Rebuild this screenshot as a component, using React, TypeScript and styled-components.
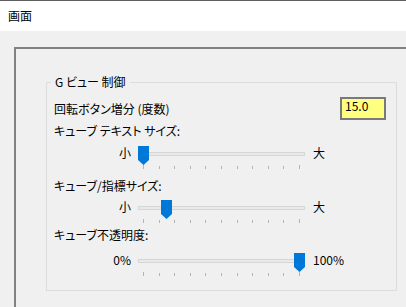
import styled, { createGlobalStyle } from "styled-components";

const GlobalStyle = createGlobalStyle`
  html, body {
    margin: 0;
    padding: 0;
    background: #f0f0f0;
  }
  body {
    font-family: "Noto Sans CJK JP", "Noto Sans", sans-serif;
    font-size: 12px;
    color: #000;
    font-feature-settings: "palt";
  }
`;

const Window = styled.div`
  width: 406px;
  height: 307px;
  overflow: hidden;
  display: flex;
  flex-direction: column;
  background: #f0f0f0;
`;

const TitleBar = styled.div`
  flex: none;
  height: 30px;
  display: flex;
  align-items: center;
  padding-left: 8px;
  background: #fff;
  border-top: 1px solid #5f5f5f;
  line-height: 14px;
`;

const Body = styled.div`
  flex: 1;
  display: flex;
  padding: 16px 0 0 14px;
  min-height: 0;
`;

/* outer panel, runs off the right and bottom edge */
const Frame = styled.div`
  flex: 1;
  border-top: 2px solid #828282;
  border-left: 2px solid #828282;
  padding: 33px 0 0 30px;
`;

const Group = styled.div`
  position: relative;
  width: 351px;
  height: 209px;
  box-sizing: border-box;
  border: 1px solid #dcdcdc;
  padding: 0 10px 0 7px;
  display: flex;
  flex-direction: column;
`;

const Legend = styled.div`
  position: absolute;
  top: -8px;
  left: 4px;
  padding: 0 4px;
  background: #f0f0f0;
  line-height: 14px;
`;

const Label = styled.div<{ $gap: number }>`
  line-height: 14px;
  margin-top: ${(p) => p.$gap}px;
`;

const InputRow = styled.div`
  display: flex;
  align-items: center;
  justify-content: space-between;
  height: 23px;
  margin-top: 14px;
`;

const TextBox = styled.div`
  width: 46px;
  height: 23px;
  box-sizing: border-box;
  border: 2px solid #7a7a7a;
  background: #ffff80;
  padding: 0 0 0 3px;
  line-height: 14px;
`;

const SliderRow = styled.div<{ $gap: number }>`
  display: grid;
  grid-template-columns: 77px 167px 1fr;
  column-gap: 7px;
  margin-top: ${(p) => p.$gap}px;
`;

const SideLabel = styled.div<{ $right?: boolean }>`
  line-height: 14px;
  margin-top: 0px;
  text-align: ${(p) => (p.$right ? "right" : "left")};
  margin-left: ${(p) => (p.$right ? 0 : 1)}px;
`;

const Track = styled.div`
  position: relative;
  padding-top: 6px;
`;

const Rail = styled.div`
  height: 4px;
  box-sizing: border-box;
  border: 1px solid #d6d6d6;
  background: #e7eaea;
`;

const Ticks = styled.div`
  display: flex;
  justify-content: space-between;
  align-items: flex-end;
  height: 4px;
  margin: 9px 5px 0 5px;
`;

const Tick = styled.div<{ $long?: boolean }>`
  width: 1px;
  height: ${(p) => (p.$long ? 4 : 3)}px;
  background: #b4b4b4;
`;

const Thumb = styled.div`
  position: absolute;
  top: 0;
  width: 11px;
  height: 19px;
  background: #0078d7;
  clip-path: polygon(0 0, 100% 0, 100% 14px, 50% 19px, 0 14px);
`;

function Slider({ min, max, pos, gap }: { min: string; max: string; pos: number; gap: number }) {
  return (
    <SliderRow $gap={gap}>
      <SideLabel $right>{min}</SideLabel>
      <Track>
        <Rail />
        <Ticks>
          {Array.from({ length: 11 }, (_, i) => (
            <Tick key={i} $long={i === 0 || i === 10} />
          ))}
        </Ticks>
        <Thumb style={{ left: pos }} />
      </Track>
      <SideLabel>{max}</SideLabel>
    </SliderRow>
  );
}

export default function App() {
  return (
    <Window>
      <GlobalStyle />
      <TitleBar>画面</TitleBar>
      <Body>
        <Frame>
          <Group>
            <Legend>G ビュー 制御</Legend>
            <InputRow>
              <span>回転ボタン増分 (度数)</span>
              <TextBox>15.0</TextBox>
            </InputRow>
            <Label $gap={4}>キューブ テキスト サイズ:</Label>
            <Slider min="小" max="大" pos={0} gap={8} />
            <Label $gap={10}>キューブ/指標サイズ:</Label>
            <Slider min="小" max="大" pos={23} gap={7} />
            <Label $gap={5}>キューブ不透明度:</Label>
            <Slider min="0%" max="100%" pos={156} gap={11} />
          </Group>
        </Frame>
      </Body>
    </Window>
  );
}
